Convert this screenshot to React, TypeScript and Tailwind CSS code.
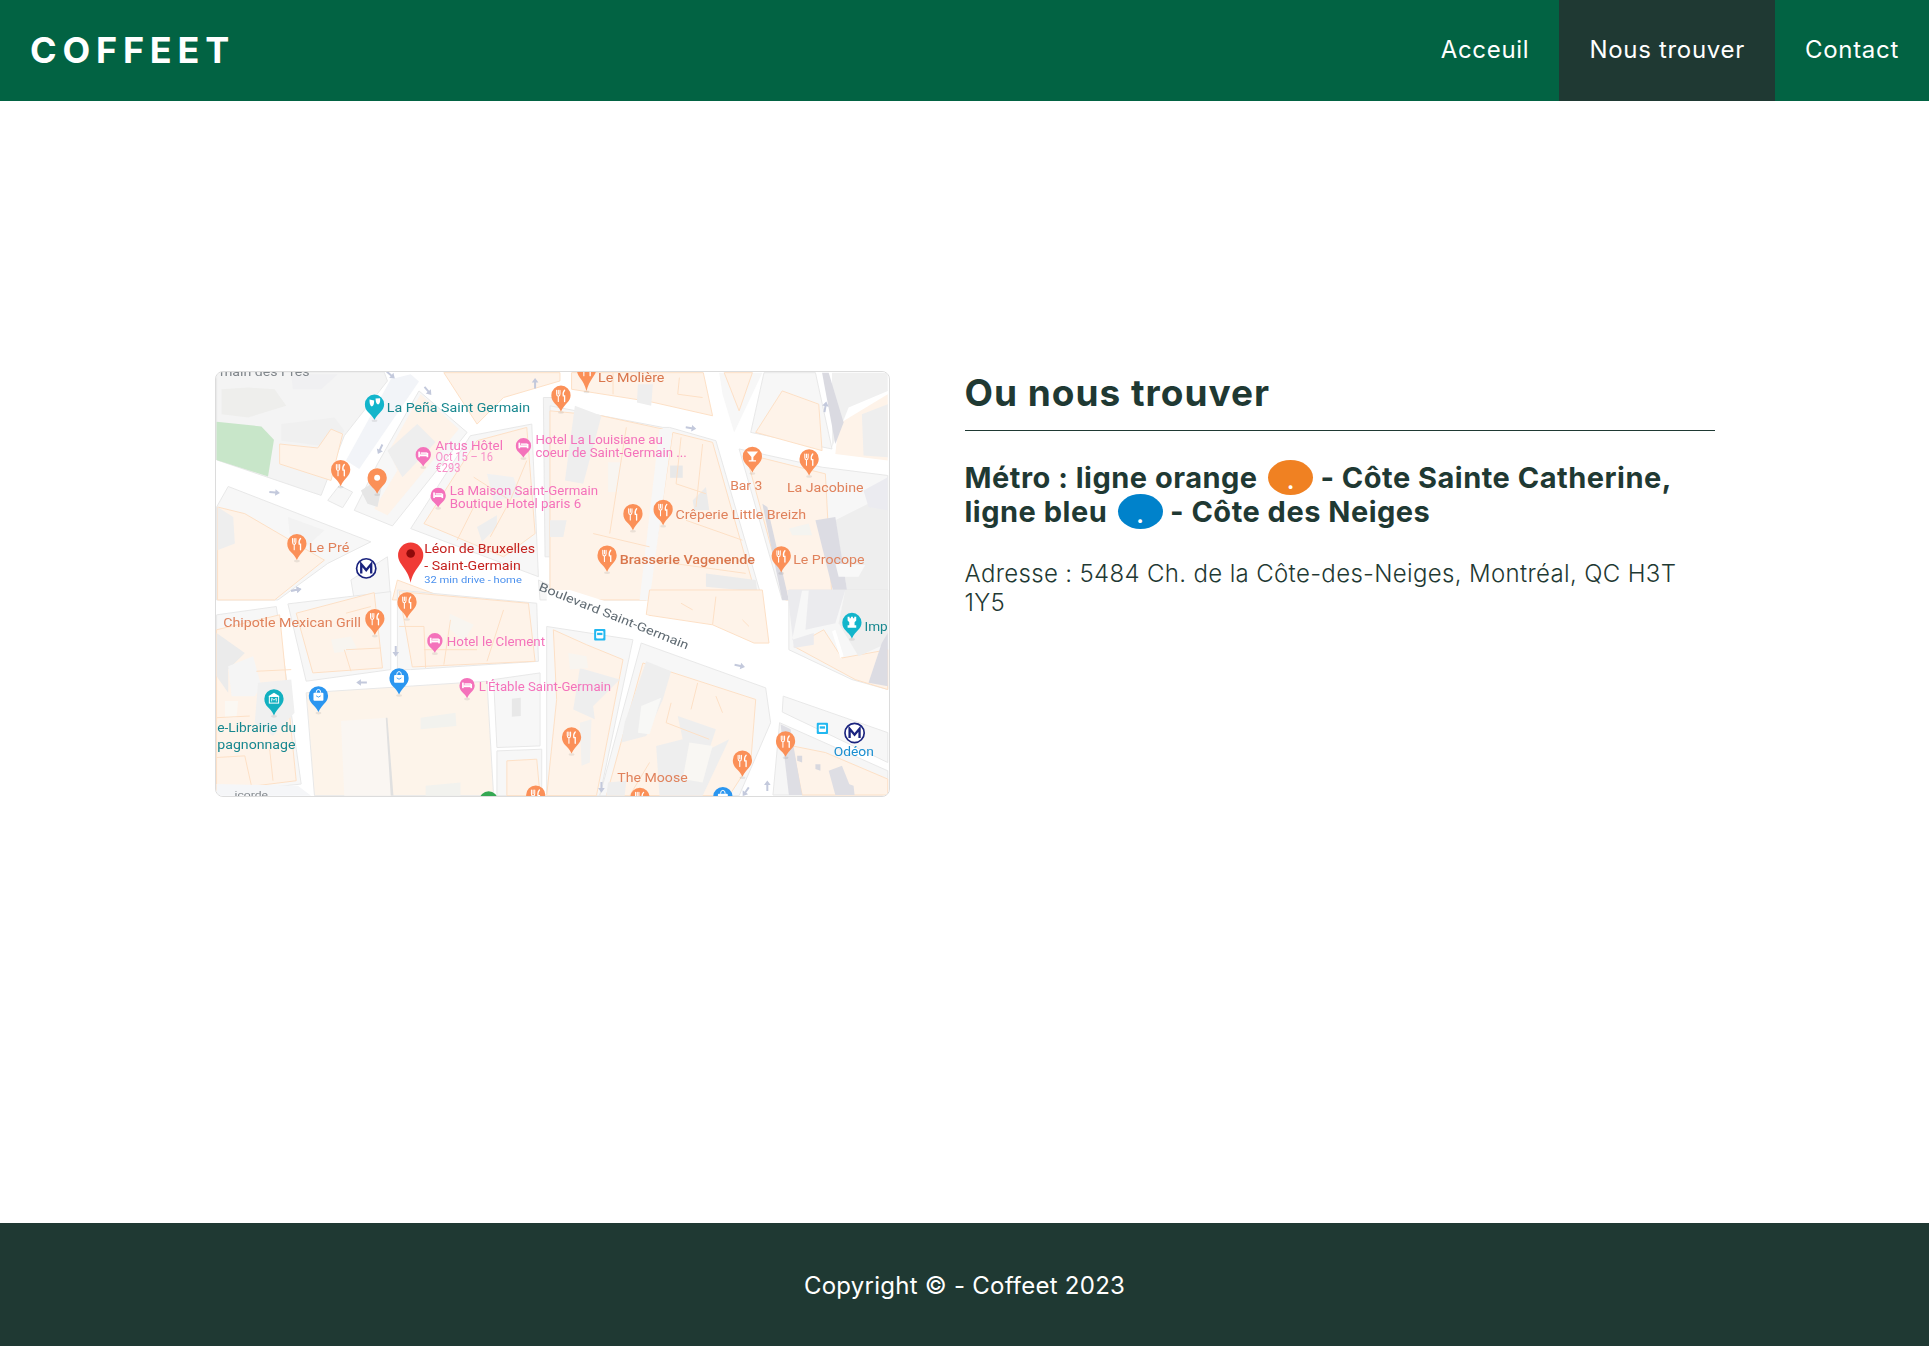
import React from "react";

const ORANGE = "#fb9058";
const PINK = "#f472bb";
const TEAL = "#12b5cb";
const BLUE = "#2b96f0";
const PEACH = "#fef3e9";
const LINE = "#fde0c6";
const BLOCK = "#f7f7f7";
const SOFT = "#eeeeee";

type G = "fork" | "dot" | "bed" | "bag" | "glass" | "mask" | "museum" | "rook" | "none";

function Glyph({ x, y, g }: { x: number; y: number; g: G }) {
  if (g === "fork")
    return (
      <g stroke="#fff" fill="none" strokeLinecap="round">
        <path d={`M${x - 13} ${y - 15}v11q0 6 5 7v16M${x - 3} ${y - 15}v11q0 6 -5 7M${x - 8} ${y - 15}v11`} strokeWidth="3.2" />
        <path d={`M${x + 11} ${y - 15}q-6 6 -4 17h4v17`} strokeWidth="4" />
      </g>
    );
  if (g === "dot") return <circle cx={x} cy={y} r="9" fill="#fff" />;
  if (g === "bed")
    return (
      <g fill="#fff">
        <rect x={x - 15} y={y - 9} width="5" height="17" />
        <rect x={x + 10} y={y - 5} width="5" height="13" />
        <rect x={x - 11} y={y - 1} width="23" height="6" />
        <rect x={x - 8} y={y - 7} width="20" height="5" opacity=".85" />
      </g>
    );
  if (g === "bag")
    return (
      <g>
        <rect x={x - 15} y={y - 9} width="30" height="24" rx="3" fill="#fff" />
        <path d={`M${x - 7} ${y - 9}q0 -10 7 -10t7 10`} stroke="#fff" strokeWidth="3" fill="none" />
        <path d={`M${x - 7} ${y}q7 8 14 0`} stroke={BLUE} strokeWidth="2.5" fill="none" />
      </g>
    );
  if (g === "glass") return <path d={`M${x - 17} ${y - 14}h34l-14 16v10h8v4h-22v-4h8v-10z`} fill="#fff" />;
  if (g === "mask")
    return (
      <g fill="#fff">
        <path d={`M${x - 15} ${y - 14}l14 3q0 16 -7 18q-8 -3 -7 -21z`} />
        <path d={`M${x + 3} ${y - 17}l14 -1q1 16 -6 19q-7 0 -8 -18z`} />
      </g>
    );
  if (g === "museum")
    return (
      <g>
        <path d={`M${x - 17} ${y - 8}l17 -10l17 10z`} fill="#fff" />
        <rect x={x - 14} y={y - 7} width="28" height="20" fill="none" stroke="#fff" strokeWidth="3" />
        <path d={`M${x - 7} ${y + 8}v-10l7 6l7 -6v10`} fill="none" stroke="#fff" strokeWidth="2.5" />
      </g>
    );
  if (g === "rook")
    return <path d={`M${x - 13} ${y - 17}h6v4h4v-4h6v4h4v-4h6v11l-5 5v9h5v8h-26v-8h5v-9l-5 -5z`} fill="#fff" />;
  return null;
}

function Pin({ x, y, tip, r = 29, c = ORANGE, g = "fork" }: { x: number; y: number; tip: number; r?: number; c?: string; g?: G }) {
  return (
    <g>
      <ellipse cx={x} cy={tip + 3} rx="9" ry="4" fill="#000" opacity=".08" />
      <path
        d={`M${x - r} ${y}a${r} ${r} 0 1 1 ${2 * r} 0c0 ${r * 0.7} ${-r * 0.62} ${r * 0.85} ${-r} ${tip - y}c${-r * 0.38} ${-(tip - y) + r * 0.85} ${-r} ${-(tip - y) + r * 0.85} ${-r} ${-(tip - y)}z`}
        fill={c}
      />
      <Glyph x={x} y={y} g={g} />
    </g>
  );
}

function Label({ x, y, w, c, fs = 36, fw = 400, t }: { x: number; y: number; w: number; c: string; fs?: number; fw?: number; t: string }) {
  return (
    <text x={x} y={y} textLength={w} lengthAdjust="spacingAndGlyphs" fill={c} fontSize={fs} fontWeight={fw} fontFamily="Roboto, sans-serif">
      {t}
    </text>
  );
}

function Metro({ x, y, r = 29 }: { x: number; y: number; r?: number }) {
  return (
    <g>
      <circle cx={x} cy={y} r={r} fill="#fff" stroke="#1a237e" strokeWidth="5" />
      <path d={`M${x - 15} ${y + 15}v-28l15 18l15 -18v28`} fill="none" stroke="#1a237e" strokeWidth="7" />
    </g>
  );
}

function Bus({ x, y }: { x: number; y: number }) {
  return (
    <g>
      <rect x={x - 17} y={y - 17} width="34" height="34" rx="3" fill="#22b8f0" />
      <rect x={x - 11} y={y - 11} width="22" height="22" rx="3" fill="#fff" />
      <rect x={x - 8} y={y - 6} width="16" height="7" fill="#22b8f0" />
    </g>
  );
}

function Block({ p, f = BLOCK, s = "#e8e8e8", w = 3 }: { p: string; f?: string; s?: string; w?: number }) {
  return <polygon points={p} fill={f} stroke={s} strokeWidth={w} />;
}

function Peach({ p }: { p: string }) {
  return <polygon points={p} fill={PEACH} stroke={LINE} strokeWidth="3" />;
}

function Ln({ d, c = LINE, w = 3 }: { d: string; c?: string; w?: number }) {
  return <path d={d} stroke={c} strokeWidth={w} fill="none" />;
}

function Arrow({ x, y, rot = 0 }: { x: number; y: number; rot?: number }) {
  return <path d="M-16 -3h18v-7l14 10l-14 10v-7h-18z" transform={`translate(${x} ${y}) rotate(${rot})`} fill="#c3c9dc" />;
}

function MapDrawing() {
  return (
    <svg viewBox="215 371 675 426" className="block w-full h-full blur-[0.35px]">
      <rect x="215" y="371" width="675" height="426" fill="#ffffff" />

      {/* ground: top left */}
      <g transform="translate(210 360) scale(.33333)">
        <Block p="15,33 520,33 530,60 400,225 330,405 15,298" f="#f4f4f4" />
        <polygon points="30,85 110,80 190,85 225,135 110,170 30,160" fill="#eeeeec" />
        <polygon points="240,40 380,40 330,85 245,85" fill="#f0f0f2" />
        <polygon points="210,190 370,170 400,210 365,260 210,240" fill="#f0f0f0" />
        <polygon points="15,183 150,197 188,237 170,348 15,298" fill="#c8e6c9" />
        <Peach p="205,250 320,262 360,205 395,220 360,360 205,310" />
        <Block p="350,420 385,375 425,395 395,442" />
        <polygon points="540,55 600,40 625,62 445,325 405,300" fill="#f2f4f8" />
        <Block p="625,90 770,215 545,497 430,450 500,310" />
        <polygon points="630,100 745,205 530,465 490,445 560,330 535,270" fill={PEACH} />
        <polygon points="530,270 620,190 675,245 575,350" fill={SOFT} />
        <polygon points="450,390 520,345 500,440 470,430" fill="#e6e6e6" />
        <Block p="700,35 1050,35 1050,60 880,110 800,190" f={PEACH} s={LINE} />
        <Block p="1000,110 1050,110 1050,590 1005,590" f="#f4f4f4" />
        <Block p="780,225 965,190 985,650 600,505" />
        <Peach p="800,240 950,200 975,520 880,590 640,490" />
        <polygon points="800,500 860,465 860,500 815,545" fill={SOFT} />
        <polygon points="830,340 910,350 930,410 850,420" fill="#f1f1f1" />
        <Ln d="M790 350L900 420M840 530L900 420M900 420L950 300M740 540L800 420" />
        <Block p="15,440 50,378 480,545 350,610 200,720 15,720" />
        <Peach p="18,440 100,460 340,600 190,720 18,720" />
        <polygon points="18,440 65,470 70,550 18,570" fill={SOFT} />
        <polygon points="230,470 340,510 290,555 235,520" fill="#f2f2f2" />
        <Block p="530,590 540,720 430,720 420,660" />
        <Peach p="560,660 640,690 720,720 545,720" />
        <Block p="985,660 1050,690 1050,720 990,720" />
        <Arrow x={190} y={396} rot={5} />
        <Arrow x={255} y={690} rot={-10} />
        <Arrow x={508} y={266} rot={115} />
        <Arrow x={652} y={90} rot={50} />
        <Arrow x={975} y={67} rot={-90} />
        <Arrow x={540} y={42} rot={40} />
      </g>

      {/* ground: top right */}
      <g transform="translate(550 360) scale(.33333)">
        <Peach p="65,35 462,35 490,165 300,122 65,85" />
        <polygon points="265,70 310,70 305,135 262,125" fill={SOFT} />
        <Ln d="M390 50L385 100L460 110M190 35L190 100" />
        <Block p="0,135 340,200 360,200 500,240 640,720 0,720" />
        <Peach p="0,150 155,165 340,205 290,720 0,720" />
        <Peach p="370,215 490,245 625,720 295,720" />
        <polygon points="330,205 370,205 300,720 270,720" fill="#f7f7f7" />
        <polygon points="75,135 155,165 100,370 45,360" fill={SOFT} />
        <polygon points="0,480 50,480 40,530 0,530" fill={SOFT} />
        <polygon points="362,315 400,315 400,352 362,352" fill="#e8e8e8" />
        <polygon points="470,640 620,660 625,695 470,680" fill="#ebebeb" />
        <polygon points="430,420 470,380 480,450 435,450" fill="#ebebeb" />
        <polygon points="175,305 215,305 205,395 175,395" fill="#f8f5f1" />
        <Ln d="M395 230L380 370L470 400M460 250L440 440M130 520L300 560M230 200L180 520M410 480L580 540M300 600L590 640" />
        <Block p="645,35 800,35 850,265 605,215" />
        <polygon points="510,35 640,35 555,215 520,100" fill="#f7f7f7" />
        <Peach p="525,35 610,35 570,150" />
        <Peach p="700,90 810,130 820,270 620,215" />
        <polygon points="850,35 1018,35 1018,90 900,140 880,190 850,260" fill="#f0f0f0" />
        <polygon points="870,190 1018,100 1018,300 860,280" fill={PEACH} />
        <polygon points="940,160 1018,130 1018,290 945,285" fill={SOFT} />
        <polygon points="820,35 840,35 885,185 860,250" fill="#dadae1" />
        <Block p="570,265 820,320 1018,345 1018,720 700,720" />
        <Peach p="590,280 830,340 850,720 710,720" />
        <polygon points="640,430 655,440 720,720 700,720" fill="#dadae1" />
        <polygon points="860,480 1018,400 1018,720 900,720" fill={SOFT} />
        <polygon points="800,480 860,470 900,720 860,720" fill="#dcdce3" />
        <polygon points="945,390 1018,350 1018,450 960,440" fill="#ebebf0" />
        <polygon points="720,505 780,490 790,525 730,525" fill="#f4f4f0" />
        <polygon points="860,610 950,615 930,650 870,650" fill="#f8f8f8" />
        <Arrow x={425} y={202} rot={8} />
        <Arrow x={830} y={138} rot={-80} />
      </g>

      {/* ground: bottom left */}
      <g transform="translate(210 590) scale(.33333)">
        <Block p="15,75 195,50 270,585 15,612" />
        <Peach p="15,120 205,75 255,575 15,605" />
        <polygon points="15,130 100,190 50,240 50,310 15,260" fill="#ebebeb" />
        <polygon points="60,245 130,245 130,305 60,305" fill="#e5e5e5" />
        <polygon points="50,230 125,200 150,290 130,320 60,320" fill="#f5f5f5" />
        <polygon points="140,280 240,270 250,370 185,440 130,400" fill="#f0f0f0" />
        <polygon points="40,335 80,335 75,385 40,385" fill="#fbf8f3" />
        <Ln d="M135 245L240 240M15 385L115 380M15 505L100 500L120 590M175 480L185 575" />
        <Block p="230,42 540,5 540,240 285,275" />
        <Peach p="255,70 490,8 515,235 305,250" />
        <polygon points="360,150 420,140 440,180 370,190" fill="#f8f5f0" />
        <Ln d="M400 180L420 245M405 70L480 50M405 180L510 175" />
        <Block p="560,0 980,40 985,215 600,240 560,240" />
        <Peach p="565,5 955,40 975,215 605,232" />
        <polygon points="718,72 790,105 760,155 715,115" fill="#f8f5f0" />
        <Ln d="M565 110L640 110L645 235M700 225L720 90M880 60L830 215M640 180L800 180" />
        <Block p="285,310 830,275 850,620 310,620" f="#fdf4ea" s="#e8e8e8" />
        <polygon points="390,395 525,385 545,620 400,620" fill="#faf6f2" />
        <polygon points="525,385 530,385 548,620 540,620" fill="#e0e0e0" />
        <polygon points="630,385 735,370 738,410 630,420" fill="#f2f2ee" />
        <polygon points="645,590 750,580 750,620 645,620" fill="#f2f2ee" />
        <Block p="850,270 990,250 990,470 860,475" />
        <polygon points="905,328 932,325 932,380 905,382" fill="#e8e8e8" />
        <Block p="860,485 995,480 995,620 860,620" />
        <Peach p="890,515 980,510 990,620 890,620" />
        <polygon points="15,585 260,590 300,620 15,620" fill="#f5f6f8" />
        <Arrow x={555} y={185} rot={90} />
        <Arrow x={452} y={279} rot={180} />
        <Arrow x={255} y={0} rot={-10} />
      </g>

      {/* ground: bottom right */}
      <g transform="translate(550 590) scale(.33333)">
        <Peach p="300,0 640,0 660,160 615,160 490,105 290,75" />
        <Ln d="M500 20L490 105M395 40L430 60M580 90L600 110" />
        <polygon points="-10,110 250,150 150,620 -10,620" fill={BLOCK} stroke="#e8e8e8" strokeWidth="3" />
        <Peach p="10,120 110,165 220,210 140,620 -10,620 20,330" />
        <polygon points="90,235 210,270 130,350 135,390 70,360" fill={SOFT} />
        <polygon points="55,190 110,200 115,235 60,240" fill="#f8f5f0" />
        <polygon points="90,400 125,390 120,520 95,530" fill="#f2f1ef" />
        <Block p="275,160 650,295 665,400 570,620 150,620" />
        <Peach p="280,220 620,330 605,520 540,620 170,620" />
        <polygon points="225,400 290,215 365,245 340,330 290,440 215,460" fill={SOFT} />
        <polygon points="275,350 335,325 300,435 265,430" fill="#f8f8f6" />
        <polygon points="385,380 500,420 480,480 540,450 460,620 330,620 320,470 400,450" fill={SOFT} />
        <polygon points="420,460 490,470 460,580 400,570" fill="#f9f7f3" />
        <polygon points="175,580 230,575 225,620 170,620" fill={SOFT} />
        <Ln d="M365 340L350 400L480 450M445 280L425 360M500 320L520 370M300 520L240 620" />
        <Block p="720,0 1018,0 1018,300 910,270 720,180" />
        <Peach p="735,170 825,120 880,205 1018,180 1018,300 920,270" />
        <polygon points="715,0 760,0 730,150 795,130 795,165 735,175" fill="#ebebee" />
        <polygon points="780,0 890,0 860,100 770,120" fill="#ebebee" />
        <polygon points="890,0 1018,0 1018,160 930,200 870,100" fill={SOFT} />
        <polygon points="1000,160 1018,130 1018,290 960,280" fill="#dcdce3" />
        <polygon points="860,120 885,200 875,205 850,125" fill="#ffffff" />
        <Block p="703,320 1018,430 1018,520 700,368" f="#f7f7f7" />
        <Block p="692,400 1018,545 1018,618 672,618" f="#f6f6f6" />
        <Peach p="730,470 830,490 1018,570 1018,618 760,618" />
        <polygon points="695,405 725,420 760,618 720,618" fill="#dedee4" />
        <polygon points="840,545 880,530 915,618 860,618" fill="#dedee4" />
        <polygon points="745,500 760,500 760,520 745,515" fill="#d8d8df" />
        <polygon points="800,525 815,525 815,545 800,540" fill="#d8d8df" />
        <polygon points="900,585 915,590 918,618 900,618" fill="#dedee4" />
        <polygon points="590,618 640,540 660,618" fill="#ffffff" />
        <polygon points="-10,0 -10,40 1018,420 1018,340 250,60 60,0" fill="#ffffff" />
        <Arrow x={572} y={229} rot={12} />
        <Arrow x={655} y={590} rot={-90} />
        <Arrow x={155} y={595} rot={90} />
        <Arrow x={590} y={608} rot={125} />
      </g>

      {/* places: top left */}
      <g transform="translate(210 360) scale(.33333)">
        <Label x={25} y={45} w={270} c="#80868b" t="main des Prés" />
        <Pin x={491} y={130} tip={177} c={TEAL} g="mask" />
        <Label x={528} y={155} w={432} c="#17878f" t="La Peña Saint Germain" />
        <Pin x={389} y={327} tip={377} />
        <Pin x={499} y={352} tip={400} g="dot" />
        <Pin x={638} y={282} tip={318} r={23} c={PINK} g="bed" />
        <Label x={675} y={267} w={203} c={PINK} t="Artus Hôtel" />
        <Label x={675} y={300} w={173} c="#f790c8" t="Oct 15 – 16" />
        <Label x={675} y={334} w={75} c="#f790c8" t="€293" />
        <Pin x={940} y={255} tip={291} r={23} c={PINK} g="bed" />
        <Label x={976} y={250} w={384} c={PINK} t="Hotel La Louisiane au" />
        <Label x={976} y={290} w={456} c={PINK} t="coeur de Saint-Germain ..." />
        <Pin x={683} y={405} tip={441} r={23} c={PINK} g="bed" />
        <Label x={718} y={403} w={447} c={PINK} t="La Maison Saint-Germain" />
        <Label x={718} y={444} w={396} c={PINK} t="Boutique Hotel paris 6" />
        <Pin x={257} y={550} tip={600} />
        <Label x={293} y={577} w={122} c="#e0825c" t="Le Pré" />
        <Metro x={466} y={625} />
        <path d="M562 585a38 38 0 1 1 76 0c0 28 -30 40 -38 83c-8 -43 -38 -55 -38 -83z" fill="#f03b36" />
        <circle cx="600" cy="580" r="13" fill="#8f0a0a" />
        <Label x={641} y={580} w={334} c="#c5221f" t="Léon de Bruxelles" />
        <Label x={641} y={630} w={291} c="#c5221f" t="- Saint-Germain" />
        <Label x={641} y={670} w={294} c="#4a90ee" fs={29} t="32 min drive - home" />
      </g>

      {/* places: top right */}
      <g transform="translate(550 360) scale(.33333)">
        <Pin x={110} y={25} tip={90} />
        <Label x={145} y={62} w={200} c="#d9764c" t="Le Molière" />
        <Pin x={33} y={103} tip={152} />
        <Pin x={610} y={287} tip={336} g="glass" />
        <Label x={543} y={388} w={97} c="#e0825c" t="Bar 3" />
        <Pin x={781} y={295} tip={345} />
        <Label x={714} y={395} w={231} c="#e0825c" t="La Jacobine" />
        <Pin x={341} y={447} tip={495} />
        <Pin x={250} y={460} tip={510} />
        <Label x={378} y={475} w={394} c="#e0825c" t="Crêperie Little Breizh" />
        <Pin x={172} y={585} tip={635} />
        <Label x={210} y={612} w={408} c="#d9764c" fw={500} t="Brasserie Vagenende" />
        <Pin x={697} y={587} tip={637} />
        <Label x={733} y={613} w={215} c="#e0825c" t="Le Procope" />
      </g>

      {/* places: bottom left */}
      <g transform="translate(210 591) scale(.33333)">
        <Pin x={492} y={83} tip={133} />
        <Label x={35} y={110} w={415} c="#e0825c" t="Chipotle Mexican Grill" />
        <Pin x={589} y={33} tip={83} />
        <Pin x={673} y={150} tip={186} r={23} c={PINK} g="bed" />
        <Label x={709} y={165} w={296} c={PINK} t="Hotel le Clement" />
        <Pin x={770} y={285} tip={323} r={23} c={PINK} g="bed" />
        <Label x={805} y={303} w={399} c={PINK} t="L'Étable Saint-Germain" />
        <Pin x={565} y={262} tip={312} c={BLUE} g="bag" />
        <Pin x={322} y={316} tip={365} c={BLUE} g="bag" />
        <Pin x={188} y={325} tip={375} c="#12b0c0" g="museum" />
        <Label x={17} y={425} w={238} c="#17878f" t="e-Librairie du" />
        <Label x={17} y={475} w={236} c="#17878f" t="pagnonnage" />
        <Label x={40} y={625} w={130} c="#80868b" fs={30} t="...icorde" />
        <circle cx="835" cy="632" r="28" fill="#34a853" />
        <Pin x={977} y={615} tip={660} />
      </g>

      {/* places: bottom right */}
      <g transform="translate(551 591) scale(.33333)">
        <Bus x={147} y={132} />
        <Bus x={818} y={414} />
        <Metro x={915} y={428} />
        <Label x={852} y={497} w={121} c="#1a8fd1" t="Odéon" />
        <Pin x={907} y={95} tip={143} c={TEAL} g="rook" />
        <Label x={945} y={122} w={70} c="#17878f" t="Imp" />
        <Pin x={62} y={440} tip={490} />
        <Pin x={577} y={510} tip={560} />
        <Pin x={707} y={452} tip={500} />
        <Pin x={268} y={622} tip={670} />
        <Pin x={518} y={620} tip={670} c={BLUE} g="bag" />
        <Label x={200} y={575} w={212} c="#e0825c" t="The Moose" />
      </g>

      <text
        transform="translate(538 590) rotate(21.8)"
        fontSize="12"
        fill="#5f6a72"
        textLength="161"
        lengthAdjust="spacingAndGlyphs"
        fontFamily="Roboto, sans-serif"
      >
        Boulevard Saint-Germain
      </text>
    </svg>
  );
}

function Dot({ className }: { className: string }) {
  return (
    <span className={`inline-block w-[45px] h-[35px] -my-[4px] ml-[3px] rounded-[50%] text-center align-[-1px] text-white text-[24px] leading-[41px] font-semibold tracking-normal ${className}`}>
      .
    </span>
  );
}

export default function App() {
  return (
    <div className="min-h-screen flex flex-col bg-white text-[#1f3933] font-['Inter',sans-serif]">
      <header className="h-[101px] bg-[#026343] flex items-stretch justify-between text-white">
        <div className="pl-[30px] pb-[2px] flex items-center text-[36px] font-bold tracking-[5.8px]">COFFEET</div>
        <nav className="flex items-stretch text-[24px] tracking-[0.7px] font-normal">
          <a className="px-[30px] pb-[2px] flex items-center">Acceuil</a>
          <a className="px-[30px] pb-[2px] flex items-center bg-[#1f3933]">Nous trouver</a>
          <a className="px-[30px] pb-[2px] flex items-center">Contact</a>
        </nav>
      </header>

      <main className="flex-1 pt-[270px] flex justify-center">
        <div className="w-[1500px] flex items-start gap-[75px]">
          <div className="w-[675px] h-[426px] rounded-[8px] overflow-hidden border border-[#dcdcdc] shrink-0">
            <MapDrawing />
          </div>
          <div className="w-[750px]">
            <h1 className="text-[37px] leading-[44px] font-bold pb-[15px] tracking-[1px]">Ou nous trouver</h1>
            <hr className="border-0 h-[1px] bg-[#1f3933]" />
            <h3 className="mt-[30px] text-[29px] leading-[34px] font-bold tracking-[0.5px]">
              Métro : ligne orange <Dot className="bg-[#f08122]" /> - Côte Sainte Catherine, ligne bleu{" "}
              <Dot className="bg-[#0082cb]" /> - Côte des Neiges
            </h3>
            <p className="mt-[30px] text-[24px] leading-[29px] tracking-[0.34px] font-light">
              Adresse : 5484 Ch. de la Côte-des-Neiges, Montréal, QC H3T 1Y5
            </p>
          </div>
        </div>
      </main>

      <footer className="h-[123px] pt-[3px] bg-[#1f3933] text-white flex items-center justify-center text-[24px] tracking-[0.25px]">
        Copyright © - Coffeet 2023
      </footer>
    </div>
  );
}
